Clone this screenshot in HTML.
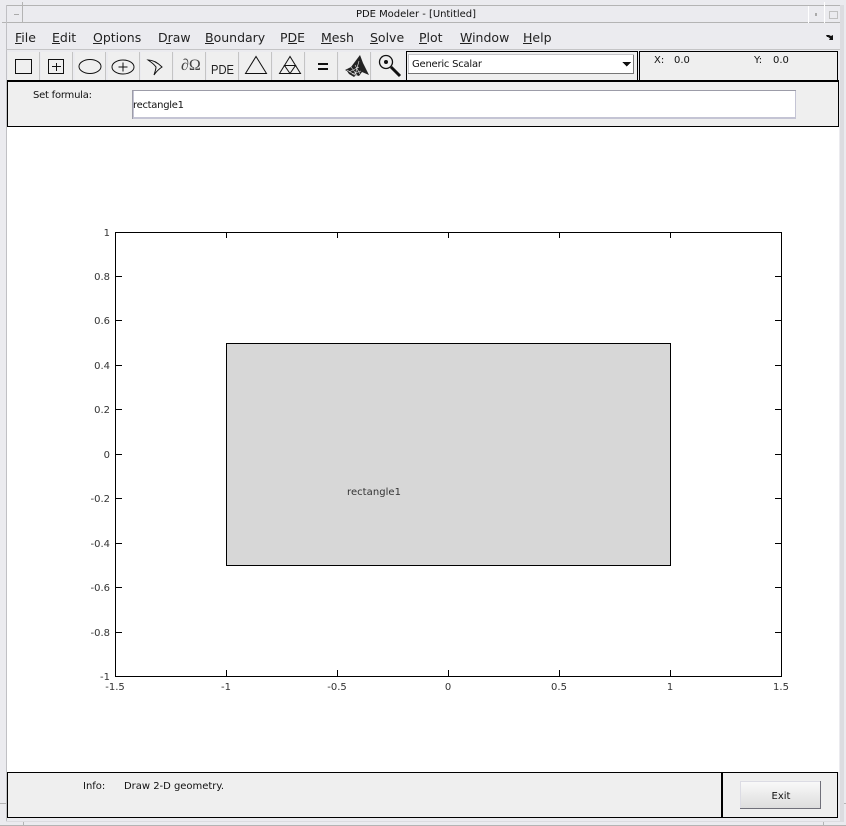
<!DOCTYPE html>
<html><head><meta charset="utf-8"><style>
html,body{margin:0;padding:0;background:#ebebef;width:846px;height:826px;overflow:hidden}
svg{display:block}
text{font-family:"DejaVu Sans",sans-serif;font-size:10px;fill:#111}
.m{font-size:12.5px;fill:#222}
.a{fill:#333}
.b{fill:#efefef}
.i{fill:none;stroke:#111;stroke-width:1}
</style></head><body>
<svg width="846" height="826" viewBox="0 0 846 826" shape-rendering="crispEdges">
<rect width="846" height="826" fill="#ebebef"/>
<!-- window frame -->
<g fill="#b4b4b4">
<rect x="6" y="5" width="835" height="1"/><rect x="2" y="22" width="839" height="1"/>
<rect x="6" y="5" width="1" height="816" fill="#c0c0c4"/>
<rect x="0" y="825" width="846" height="1"/>
<rect x="23" y="822" width="1" height="4"/><rect x="823" y="822" width="1" height="4"/>
<rect x="0" y="803" width="6" height="1"/><rect x="842" y="803" width="4" height="1"/>
<rect x="6" y="49" width="834" height="1" fill="#c4c4c6"/>
<rect x="840" y="5" width="4" height="816" fill="#dcdce0"/>
<rect x="6" y="821" width="838" height="1" fill="#dcdce0"/>
</g>
<rect x="22" y="2" width="1" height="21" fill="#b4b4b4"/>
<rect x="14" y="14" width="5" height="1" fill="#aaa"/>
<rect x="808" y="6" width="1" height="17" fill="#fff"/>
<rect x="824" y="2" width="1" height="21" fill="#fff"/>
<rect x="815" y="13" width="2" height="3" fill="#aaa"/>
<rect x="829.500" y="11.500" width="8" height="7" fill="#ebebef" stroke="#c0c0c0"/>
<text x="416" y="17" text-anchor="middle" textLength="120" fill="#222">PDE Modeler - [Untitled]</text>

<!-- menu -->
<g>
<text class="m" x="15" y="42">File</text><rect x="15" y="43" width="7" height="1" fill="#222"/>
<text class="m" x="52" y="42">Edit</text><rect x="52" y="43" width="8" height="1" fill="#222"/>
<text class="m" x="93" y="42">Options</text><rect x="93" y="43" width="9" height="1" fill="#222"/>
<text class="m" x="158" y="42">Draw</text><rect x="166" y="43" width="5" height="1" fill="#222"/>
<text class="m" x="205" y="42">Boundary</text><rect x="205" y="43" width="9" height="1" fill="#222"/>
<text class="m" x="280" y="42">PDE</text><rect x="288" y="43" width="9" height="1" fill="#222"/>
<text class="m" x="321" y="42">Mesh</text><rect x="321" y="43" width="11" height="1" fill="#222"/>
<text class="m" x="370" y="42">Solve</text><rect x="370" y="43" width="8" height="1" fill="#222"/>
<text class="m" x="419" y="42">Plot</text><rect x="419" y="43" width="8" height="1" fill="#222"/>
<text class="m" x="460" y="42">Window</text><rect x="460" y="43" width="12" height="1" fill="#222"/>
<text class="m" x="523" y="42">Help</text><rect x="523" y="43" width="9" height="1" fill="#222"/>
</g>
<path d="M826 35h3l2 1 2-1v5h-4l1-1.500-2-1.500-1 0z" fill="#111" shape-rendering="geometricPrecision"/>

<!-- toolbar -->
<g>
<rect x="8" y="52" width="31" height="29" class="b"/>
<rect x="41" y="52" width="31" height="29" class="b"/>
<rect x="75" y="52" width="30" height="29" class="b"/>
<rect x="108" y="52" width="31" height="29" class="b"/>
<rect x="141" y="52" width="31" height="29" class="b"/>
<rect x="174" y="52" width="31" height="29" class="b"/>
<rect x="207" y="52" width="31" height="29" class="b"/>
<rect x="240" y="52" width="31" height="29" class="b"/>
<rect x="273" y="52" width="31" height="29" class="b"/>
<rect x="306" y="52" width="31" height="29" class="b"/>
<rect x="339" y="52" width="31" height="29" class="b"/>
<rect x="372" y="52" width="32" height="29" class="b"/>
</g>
<g fill="#c4c4c4">
<rect x="39" y="52" width="1" height="29"/><rect x="72" y="52" width="1" height="29"/><rect x="105" y="52" width="1" height="29"/><rect x="139" y="52" width="1" height="29"/><rect x="172" y="52" width="1" height="29"/><rect x="205" y="52" width="1" height="29"/><rect x="238" y="52" width="1" height="29"/><rect x="271" y="52" width="1" height="29"/><rect x="304" y="52" width="1" height="29"/><rect x="337" y="52" width="1" height="29"/><rect x="370" y="52" width="1" height="29"/>
</g>
<rect x="15.500" y="59.500" width="16" height="14" class="i"/>
<rect x="48.500" y="59.500" width="15" height="14" class="i"/>
<path class="i" d="M56.500 63v8M52 66.500h9"/>
<g shape-rendering="geometricPrecision">
<ellipse cx="90" cy="66.500" rx="11" ry="7" class="i"/>
<ellipse cx="123" cy="67" rx="11" ry="7" class="i"/>
<path class="i" d="M123 62.500v9M118.500 67h9"/>
<path class="i" d="M148 60c5 0 10 3 14 7-3 2-6 5-8 8 1-3 2-6 2-8-2-3-5-5-8-7z"/>
<text x="181" y="70" style="font-family:'Liberation Serif',serif;font-size:16px;fill:#444">∂Ω</text>
<text x="211" y="74" textLength="23" lengthAdjust="spacingAndGlyphs" style="font-family:'Liberation Sans',sans-serif;font-size:12.500px;fill:#222">PDE</text>
<path class="i" d="M256 56.500L245.500 73.500H266.500Z"/>
<path class="i" d="M290 56.500L279.500 73.500H300.500ZM284.500 65.500H295.500L290 73.500Z"/>
<path d="M345 70l6-3 9-12 3 8 6 12-7-3-3 4-3-1-2 2-5-3-2-3z" fill="#222"/>
<path d="M347 70l8 5 4-14M351 67l6 8M355 65l5 9M349 72l10-5M352 74l9-3" fill="none" stroke="#efefef" stroke-width=".6"/>
<circle cx="386" cy="62" r="6.500" fill="none" stroke="#111" stroke-width="1.300"/>
<circle cx="386" cy="62" r="2" fill="#111"/>
<path d="M391 67l9 9" stroke="#111" stroke-width="3" fill="none"/>
</g>
<rect x="318" y="63" width="10" height="2" fill="#111"/><rect x="318" y="68" width="10" height="2" fill="#111"/>

<!-- popup -->
<rect x="406.500" y="51.500" width="231" height="29" class="b" stroke="#000"/>
<rect x="408.500" y="54.500" width="225" height="19" fill="#fff" stroke="#c4c4c8"/>
<rect x="633" y="55" width="1" height="19" fill="#777"/><rect x="408" y="73" width="226" height="1" fill="#777"/>
<text x="412" y="67" textLength="70">Generic Scalar</text>
<path d="M622 62h9l-4.500 4.500z" fill="#111"/>
<!-- XY -->
<rect x="639.500" y="51.500" width="198" height="29" class="b" stroke="#000"/>
<text x="654" y="63">X:</text><text x="674" y="63">0.0</text>
<text x="754" y="63">Y:</text><text x="773" y="63">0.0</text>

<!-- formula -->
<rect x="7.500" y="81.500" width="831" height="45" class="b" stroke="#000"/>
<rect x="7" y="80" width="832" height="2" fill="#000"/>
<text x="33" y="98" textLength="59">Set formula:</text>
<rect x="132" y="90" width="664" height="29" fill="#c4c4d4"/>
<rect x="132" y="90" width="664" height="1" fill="#9c9ca8"/><rect x="132" y="90" width="1" height="29" fill="#9c9ca8"/>
<rect x="134" y="91" width="661" height="26" fill="#fff"/>
<text x="133" y="108" textLength="51">rectangle1</text>

<!-- white area -->
<rect x="7" y="127" width="832" height="645" fill="#fff"/>

<!-- plot -->
<rect x="226.500" y="343.500" width="444" height="222" fill="#d7d7d7" stroke="#000"/>
<rect x="115.500" y="232.500" width="666" height="444" fill="none" stroke="#000"/>
<path d="M226.500 233v5M337.500 233v5M448.500 233v5M559.500 233v5M670.500 233v5M226.500 676v-6M337.500 676v-6M448.500 676v-6M559.500 676v-6M670.500 676v-6M116 276.500h6M116 320.500h6M116 365.500h6M116 409.500h6M116 454.500h6M116 498.500h6M116 543.500h6M116 587.500h6M116 632.500h6M781 276.500h-6M781 320.500h-6M781 365.500h-6M781 409.500h-6M781 454.500h-6M781 498.500h-6M781 543.500h-6M781 587.500h-6M781 632.500h-6" stroke="#000" fill="none"/>
<g text-anchor="end">
<text class="a" x="110" y="236">1</text>
<text class="a" x="110" y="280">0.8</text>
<text class="a" x="110" y="324">0.6</text>
<text class="a" x="110" y="369">0.4</text>
<text class="a" x="110" y="413">0.2</text>
<text class="a" x="110" y="458">0</text>
<text class="a" x="110" y="502">-0.2</text>
<text class="a" x="110" y="547">-0.4</text>
<text class="a" x="110" y="591">-0.6</text>
<text class="a" x="110" y="636">-0.8</text>
<text class="a" x="110" y="680">-1</text>
</g>
<g text-anchor="middle">
<text class="a" x="115" y="690">-1.5</text>
<text class="a" x="226" y="690">-1</text>
<text class="a" x="337" y="690">-0.5</text>
<text class="a" x="448" y="690">0</text>
<text class="a" x="559" y="690">0.5</text>
<text class="a" x="670" y="690">1</text>
<text class="a" x="781" y="690">1.5</text>
</g>
<text class="a" x="347" y="495" textLength="54">rectangle1</text>

<!-- status -->
<rect x="7.500" y="772.500" width="830" height="45" class="b" stroke="#000"/>
<rect x="721" y="772" width="2" height="46" fill="#000"/>
<text x="83" y="789">Info:</text>
<text x="124" y="789" textLength="100">Draw 2-D geometry.</text>
<defs><linearGradient id="g" x1="0" y1="0" x2="0" y2="1"><stop offset="0" stop-color="#fafafa"/><stop offset="1" stop-color="#dcdcdc"/></linearGradient></defs>
<rect x="740" y="781" width="81" height="28" fill="url(#g)"/>
<rect x="740" y="781" width="81" height="1" fill="#dcdce4"/><rect x="740" y="781" width="1" height="28" fill="#dcdce4"/>
<rect x="740" y="808" width="81" height="1" fill="#70707a"/><rect x="820" y="781" width="1" height="28" fill="#70707a"/>
<text x="781" y="799" text-anchor="middle">Exit</text>
</svg>
</body></html>
